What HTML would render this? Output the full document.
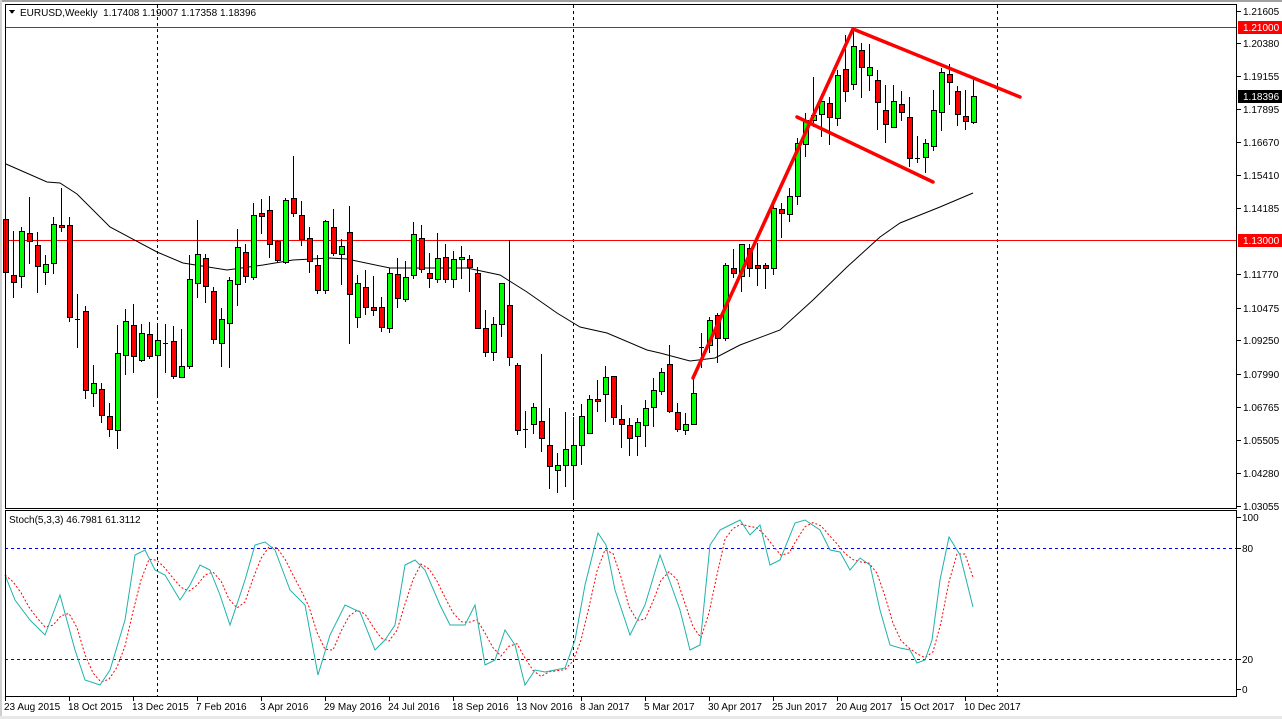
<!DOCTYPE html>
<html><head><meta charset="utf-8">
<style>
html,body{margin:0;padding:0;background:#fff;}
body{width:1282px;height:719px;overflow:hidden;position:relative;font-family:"Liberation Sans",sans-serif;}
svg{position:absolute;left:0;top:0;}
text{font-family:"Liberation Sans",sans-serif;font-size:10px;}
</style></head>
<body>
<svg id="s" width="1282" height="719" xmlns="http://www.w3.org/2000/svg" shape-rendering="crispEdges">
<rect x="0" y="0" width="1282" height="719" fill="#fff"/>
<rect x="0" y="0" width="1282" height="2" fill="#a0a0a0"/>
<rect x="0" y="0" width="2" height="719" fill="#d0d0d0"/>
<rect x="0" y="716" width="1282" height="3" fill="#e8e8e8"/>
<g id="grid"></g>
<line x1="5" y1="27.5" x2="1237" y2="27.5" stroke="#ff0000" stroke-width="1"/>
<line x1="5" y1="240.5" x2="1237" y2="240.5" stroke="#ff0000" stroke-width="1"/>
<line x1="5" y1="548.5" x2="1237" y2="548.5" stroke="#0000ff" stroke-dasharray="3,3"/>
<line x1="5" y1="659.5" x2="1237" y2="659.5" stroke="#0000ff" stroke-dasharray="3,3"/>
<g id="ma"></g>
<g id="candles"></g>
<g shape-rendering="auto" stroke="#ff0000" stroke-width="3.5" stroke-linecap="round">
<line x1="693" y1="378" x2="853" y2="29"/>
<line x1="853" y1="29" x2="1020" y2="97"/>
<line x1="797" y1="117" x2="933" y2="182"/>
</g>
<g id="stoch" shape-rendering="auto"></g>
<rect x="5.5" y="4.5" width="1231" height="504" fill="none" stroke="#000"/>
<rect x="5.5" y="510.5" width="1231" height="186" fill="none" stroke="#000"/>
<g id="axis"></g>
<path d="M9 10 L15 10 L12 14 Z" fill="#000"/>
<text x="20" y="16" fill="#000" font-size="10.5">EURUSD,Weekly&#160; 1.17408 1.19007 1.17358 1.18396</text>
<text x="9" y="523" fill="#000">Stoch(5,3,3) 46.7981 61.3112</text>
</svg>
<script>
var NS="http://www.w3.org/2000/svg";
function el(p,t,a,txt){var e=document.createElementNS(NS,t);for(var k in a)e.setAttribute(k,a[k]);if(txt!=null)e.textContent=txt;document.getElementById(p).appendChild(e);return e;}
var C=[[219,272,130,280],[275,282,231,298],[276,231,227,288],[233,241,197,264],[245,266,232,293],[272,264,255,285],[263,224,217,274],[225,227,188,232],[225,317,217,322],[319,319,294,348],
[311,390,306,399],[393,383,365,407],[389,415,383,423],[416,429,403,437],[430,353,325,449],[355,321,309,375],[325,356,304,373],[360,333,324,362],[334,356,322,359],[355,340,323,397],
[343,343,324,373],[341,376,326,379],[377,366,329,378],[366,279,255,369],[283,254,220,298],[258,286,254,303],[291,339,287,344],[343,319,308,367],[323,280,277,368],[284,247,229,306],
[252,276,244,283],[277,215,203,280],[213,216,199,234],[210,244,196,258],[241,260,240,263],[262,200,198,264],[198,213,156,217],[215,239,201,246],[238,261,227,273],[265,290,255,294],
[290,221,220,294],[227,253,209,256],[254,246,239,285],[232,294,206,344],[317,283,275,328],[287,307,270,315],[307,310,276,316],[307,327,297,332],[328,273,268,333],[274,298,258,308],
[299,277,261,302],[275,234,222,279],[238,269,225,273],[273,278,253,288],[279,258,233,283],[257,279,244,283],[279,259,251,288],[259,257,246,279],[259,267,255,292],[273,328,267,328],
[328,352,310,357],[352,324,317,361],[324,283,283,337],[305,357,240,366],[365,430,363,435],[429,429,411,448],[424,407,403,434],[421,438,354,452],[445,466,408,489],[470,465,453,493],
[465,449,412,487],[465,445,417,498],[445,416,404,465],[433,399,395,432],[399,401,380,412],[394,377,366,422],[376,417,376,425],[419,424,405,448],[425,438,418,456],[436,422,418,456],
[425,408,400,447],[407,390,378,427],[391,372,368,395],[364,411,345,413],[412,429,403,432],[430,424,413,435],[424,393,379,424],[347,347,333,368],[345,320,317,353],[315,338,313,363],
[338,265,263,341],[268,273,249,278],[276,244,244,292],[248,268,244,277],[265,268,243,286],[265,268,263,289],[268,208,202,275],[209,213,203,238],[214,196,188,222],[196,143,138,205],
[144,120,113,157],[120,115,77,127],[114,101,94,137],[103,117,97,145],[118,75,70,126],[69,91,35,102],[84,46,29,90],[50,67,43,98],[75,67,44,91],[80,102,70,130],
[110,124,85,143],[127,101,85,128],[104,112,91,121],[117,158,97,167],[158,158,136,163],[157,143,139,173],[146,110,90,151],[112,72,68,131],[74,82,64,105],[91,114,86,126],
[116,121,90,130],[122,96,79,124]];
C.forEach(function(c,i){
 var x=5+8*i;
 el("candles","line",{x1:x+0.5,y1:c[2],x2:x+0.5,y2:c[3],stroke:"#000"});
 var t=Math.min(c[0],c[1]),b=Math.max(c[0],c[1]);
 if(b-t<1){el("candles","line",{x1:x-2,y1:t+0.5,x2:x+3,y2:t+0.5,stroke:"#000"});}
 else el("candles","rect",{x:x-2+0.5,y:t+0.5,width:5,height:b-t,fill:(c[1]<c[0]?"#00ff00":"#ff0000"),stroke:"#000"});
});
var MA=[[6,164],[47,182],[60,183],[77,194],[110,227],[157,252],[183,263],[227,270],[263,265],[293,260],[330,258],[347,259],[390,268],[467,268],[500,275],[527,292],[557,313],[580,327],[607,333],[647,350],[660,353],[690,361],[715,358],[740,345],[780,330],[813,300],[847,267],[880,237],[900,223],[940,207],[973,193]];
el("ma","polyline",{points:MA.map(function(p){return p.join(",")}).join(" "),fill:"none",stroke:"#000","stroke-width":1,"shape-rendering":"auto"});
var K=[[5,575],[15,600],[30,620],[45,635],[60,595],[75,650],[85,680],[100,685],[110,670],[125,620],[135,555],[145,550],[155,570],[165,575],[180,600],[190,585],[200,565],[210,570],[220,595],[230,625],[245,580],[255,545],[265,542],[275,550],[290,590],[305,605],[318,675],[330,635],[345,605],[360,612],[375,650],[385,640],[395,625],[405,565],[415,560],[425,570],[440,605],[450,625],[465,625],[475,605],[485,665],[495,660],[505,630],[515,645],[525,685],[535,670],[545,672],[555,670],[565,668],[575,640],[585,585],[598,533],[606,545],[615,590],[630,635],[645,605],[660,555],[670,582],[680,610],[690,650],[700,645],[710,545],[720,530],[730,525],[740,520],[750,535],[760,525],[770,565],[780,560],[795,523],[805,520],[820,530],[830,550],[840,552],[850,570],[860,558],[870,565],[880,610],[890,645],[900,648],[910,650],[917,663],[925,660],[932,640],[940,580],[949,537],[960,555],[973,607]];
function interp(x){for(var j=0;j<K.length-1;j++){if(x>=K[j][0]&&x<=K[j+1][0]){var f=(x-K[j][0])/(K[j+1][0]-K[j][0]);return K[j][1]+f*(K[j+1][1]-K[j][1]);}}return K[K.length-1][1];}
var ks=[];for(var i=0;i<122;i++){ks.push([5+8*i,interp(5+8*i)]);}
var ds=[];for(var i=0;i<122;i++){var a=ks[Math.max(0,i-2)][1],b=ks[Math.max(0,i-1)][1],c=ks[i][1];ds.push([ks[i][0],(a+b+c)/3]);}
el("stoch","polyline",{points:ds.map(function(p){return p[0]+","+p[1].toFixed(1)}).join(" "),fill:"none",stroke:"#ff0000","stroke-width":1,"stroke-dasharray":"2,2"});
el("stoch","polyline",{points:K.map(function(p){return p.join(",")}).join(" "),fill:"none",stroke:"#20b2aa","stroke-width":1});
[157,573,997].forEach(function(x){
 el("grid","line",{x1:x+0.5,y1:5,x2:x+0.5,y2:696,stroke:"#000","stroke-dasharray":"3,3"});
});
var P=[["1.21605",11],["1.20380",43],["1.19155",76],["1.17895",109],["1.16670",142],["1.15410",175],["1.14185",208],["1.11770",274],["1.10475",308],["1.09250",340],["1.07990",374],["1.06765",407],["1.05505",440],["1.04280",473],["1.03055",506]];
P.forEach(function(p){
 el("axis","line",{x1:1237,y1:p[1]+0.5,x2:1241,y2:p[1]+0.5,stroke:"#000"});
 el("axis","text",{x:1243,y:p[1]+4,fill:"#000"},p[0]);
});
function box(y,txt,bg){el("axis","rect",{x:1238,y:y-6,width:44,height:13,fill:bg});el("axis","text",{x:1243,y:y+4,fill:"#fff"},txt);}
box(27,"1.21000","#ff0000");box(240,"1.13000","#ff0000");box(96,"1.18396","#000");
[["100",517],["80",548],["20",659],["0",689]].forEach(function(p){
 el("axis","line",{x1:1237,y1:p[1]+0.5,x2:1241,y2:p[1]+0.5,stroke:"#000"});
 el("axis","text",{x:1242,y:p[1]+4,fill:"#000"},p[0]);
});
var D=[["23 Aug 2015",5],["18 Oct 2015",69],["13 Dec 2015",133],["7 Feb 2016",197],["3 Apr 2016",261],["29 May 2016",325],["24 Jul 2016",389],["18 Sep 2016",453],["13 Nov 2016",517],["8 Jan 2017",581],["5 Mar 2017",645],["30 Apr 2017",709],["25 Jun 2017",773],["20 Aug 2017",837],["15 Oct 2017",901],["10 Dec 2017",965]];
D.forEach(function(d){
 el("axis","line",{x1:d[1]+0.5,y1:697,x2:d[1]+0.5,y2:701,stroke:"#000"});
 el("axis","text",{x:d[1]-1,y:710,fill:"#000"},d[0]);
});
</script>
</body></html>
